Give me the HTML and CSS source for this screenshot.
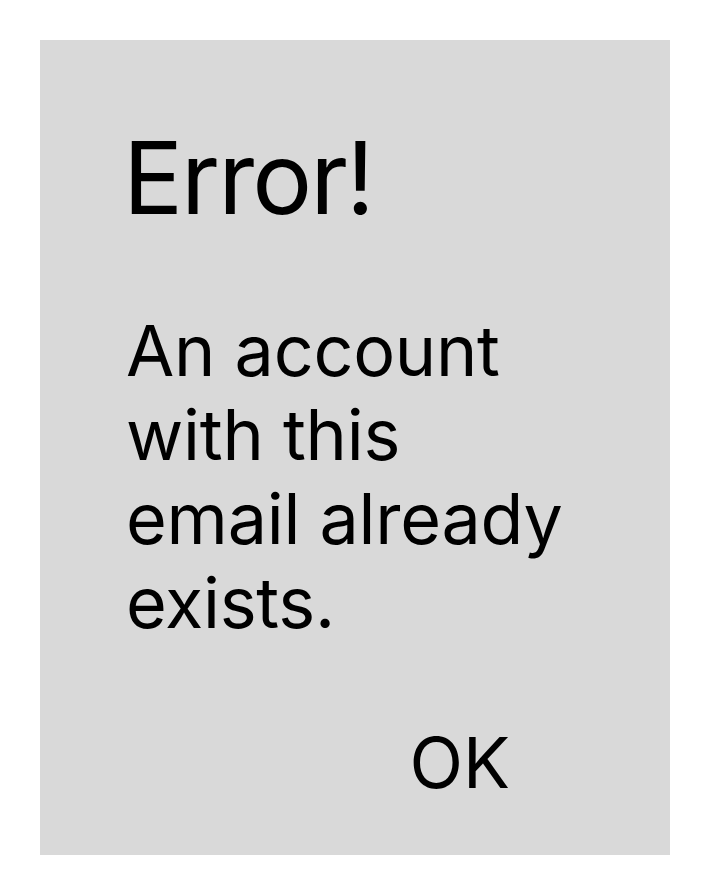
FILE: index.html
```html
<!DOCTYPE html>
<html lang="en">
<head>
<meta charset="utf-8">
<title>Error</title>
<link rel="stylesheet" href="styles.css">
</head>
<body>
<div class="dialog">
  <h1 class="title">Error!</h1>
  <p class="message">An account with this email already exists.</p>
  <div class="actions">
    <span class="ok">OK</span>
  </div>
</div>
</body>
</html>
```
FILE: styles.css
```css
html, body {
  margin: 0;
  padding: 0;
  background: #ffffff;
}
body {
  padding: 40px;
  font-family: "Inter", "Liberation Sans", sans-serif;
  color: #000000;
}
.dialog {
  width: 630px;
  height: 815px;
  box-sizing: border-box;
  background: #d9d9d9;
  padding: 77px 0 0 83px;
  display: flex;
  flex-direction: column;
}
.title {
  margin: 0;
  font-size: 100px;
  font-weight: 400;
  line-height: 121px;
  letter-spacing: -2px;
}
.message {
  margin: 71px 0 0 3px;
  width: 448px;
  font-size: 70px;
  line-height: 84px;
  letter-spacing: -0.25px;
}
.actions {
  margin-top: 75px;
  display: flex;
  justify-content: flex-end;
  padding-right: 160px;
}
.ok {
  font-size: 70px;
  line-height: 85px;
}
```
